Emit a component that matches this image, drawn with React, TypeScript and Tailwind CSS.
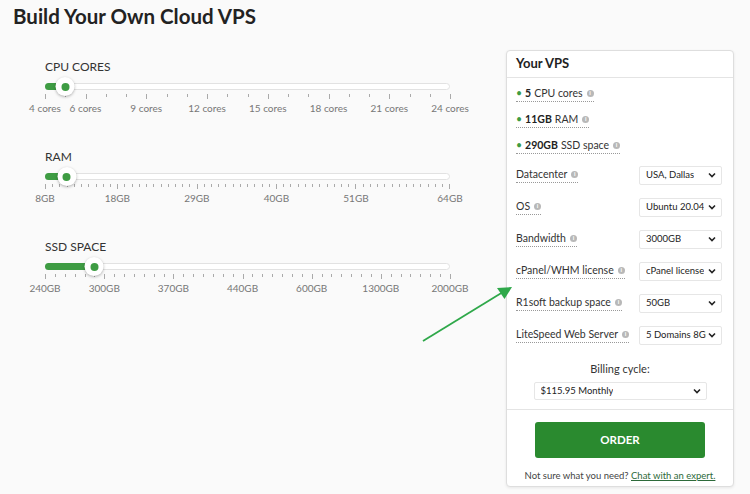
import React from "react";

const FONT = { fontFamily: '"Lato", "Noto Sans", sans-serif' };
const TRACK_W = 405;

type Major = { at: number; label: string };

function Slider({
  title,
  steps,
  value,
  majors,
}: {
  title: string;
  steps: number;
  value: number;
  majors: Major[];
}) {
  const pos = (i: number) => (i / steps) * TRACK_W;
  const majorSet = new Set(majors.map((m) => m.at));

  return (
    <div className="h-[90px]">
      <div className="text-[12px] leading-[16px] text-[#333]">{title}</div>
      <div className="relative mt-[8px] w-[405px]">
        <div className="h-[7px] rounded-full border border-[#e2e2e2] bg-white" />
        <div
          className="absolute left-0 top-0 h-[7px] rounded-full bg-[#3e9c43]"
          style={{ width: pos(value) }}
        />
        <div
          className="absolute top-[-6px] flex h-[19px] w-[19px] -translate-x-1/2 items-center justify-center rounded-full bg-white shadow-[0_1px_3px_rgba(0,0,0,0.3)]"
          style={{ left: pos(value) }}
        >
          <div className="h-[8px] w-[8px] rounded-full bg-[#3e9c43]" />
        </div>
      </div>
      <div className="mt-[4px] flex h-[5px] w-[406px] items-start justify-between">
        {Array.from({ length: steps + 1 }).map((_, i) => (
          <div
            key={i}
            className={`w-px bg-[#aaa] ${majorSet.has(i) ? "h-[5px]" : "h-[3px]"}`}
          />
        ))}
      </div>
      <div className="relative mt-[2px] h-[14px] w-[405px]">
        {majors.map((m) => (
          <span
            key={m.label}
            className="absolute top-0 -translate-x-1/2 whitespace-nowrap text-[10px] leading-[14px] text-[#777]"
            style={{ left: pos(m.at) }}
          >
            {m.label}
          </span>
        ))}
      </div>
    </div>
  );
}

function Info() {
  return (
    <span className="ml-[4px] inline-flex h-[7px] w-[7px] items-center justify-center rounded-full bg-[#b8b8b8] text-[6px] font-bold leading-none text-white">
      i
    </span>
  );
}

function Chevron() {
  return (
    <svg width="8" height="6" viewBox="0 0 8 6" className="shrink-0">
      <path d="M1 1.5 L4 4.5 L7 1.5" fill="none" stroke="#222" strokeWidth="1.6" />
    </svg>
  );
}

function Select({ value, className }: { value: string; className: string }) {
  return (
    <div
      className={`flex items-center justify-between overflow-hidden rounded-[2px] border border-[#e6e6e6] bg-white pl-[6px] pr-[5px] text-[9.5px] text-[#222] ${className}`}
    >
      <span className="mr-[2px] overflow-hidden whitespace-nowrap">{value}</span>
      <Chevron />
    </div>
  );
}

const specs = [
  { bold: "5", rest: "CPU cores" },
  { bold: "11GB", rest: "RAM" },
  { bold: "290GB", rest: "SSD space" },
];

const options = [
  { label: "Datacenter", value: "USA, Dallas" },
  { label: "OS", value: "Ubuntu 20.04" },
  { label: "Bandwidth", value: "3000GB" },
  { label: "cPanel/WHM license", value: "cPanel license" },
  { label: "R1soft backup space", value: "50GB" },
  { label: "LiteSpeed Web Server", value: "5 Domains 8GB" },
];

export default function App() {
  return (
    <div className="relative h-[494px] w-[750px] overflow-hidden bg-[#fafafa]" style={FONT}>
      <h1 className="px-[13px] pt-[2px] text-[20.5px] font-bold leading-[28px] text-[#222]">
        Build Your Own Cloud VPS
      </h1>

      <div className="flex items-start">
        <div className="mt-[29px] pl-[45px]">
          <Slider
            title="CPU CORES"
            steps={20}
            value={1}
            majors={[
              { at: 0, label: "4 cores" },
              { at: 2, label: "6 cores" },
              { at: 5, label: "9 cores" },
              { at: 8, label: "12 cores" },
              { at: 11, label: "15 cores" },
              { at: 14, label: "18 cores" },
              { at: 17, label: "21 cores" },
              { at: 20, label: "24 cores" },
            ]}
          />
          <Slider
            title="RAM"
            steps={56}
            value={3}
            majors={[
              { at: 0, label: "8GB" },
              { at: 10, label: "18GB" },
              { at: 21, label: "29GB" },
              { at: 32, label: "40GB" },
              { at: 43, label: "51GB" },
              { at: 56, label: "64GB" },
            ]}
          />
          <Slider
            title="SSD SPACE"
            steps={41}
            value={5}
            majors={[
              { at: 0, label: "240GB" },
              { at: 6, label: "300GB" },
              { at: 13, label: "370GB" },
              { at: 20, label: "440GB" },
              { at: 27, label: "600GB" },
              { at: 34, label: "1300GB" },
              { at: 41, label: "2000GB" },
            ]}
          />
        </div>

        <div className="ml-[55px] mt-[20px] w-[228px] rounded-[4px] border border-[#dedede] bg-white shadow-[0_1px_3px_rgba(0,0,0,0.08)]">
          <div className="flex h-[27px] items-center border-b border-[#e4e4e4] px-[9px] text-[13px] font-bold text-[#222]">
            Your VPS
          </div>
          <div className="pl-[9px] pr-[11px] pt-[3px]">
            {specs.map((s) => (
              <div key={s.rest} className="flex h-[26px] items-center">
                <span className="flex items-center border-b border-dotted border-[#999] pb-[1px] text-[10.5px] leading-[14px] text-[#333]">
                  <span className="mr-[3px] text-[#3e9c43]">•</span>
                  <b className="mr-[3px] text-[#222]">{s.bold}</b>
                  {s.rest}
                  <Info />
                </span>
              </div>
            ))}
            {options.map((o) => (
              <div key={o.label} className="flex h-[32px] items-center justify-between">
                <span className="flex items-center border-b border-dotted border-[#999] pb-[1px] text-[10.5px] leading-[14px] text-[#333]">
                  {o.label}
                  <Info />
                </span>
                <Select value={o.value} className="h-[19px] w-[83px]" />
              </div>
            ))}
          </div>
          <div className="mt-[10px] text-center text-[11px] leading-[16px] text-[#333]">
            Billing cycle:
          </div>
          <div className="mt-[5px] flex justify-center">
            <Select value="$115.95 Monthly" className="h-[18px] w-[173px]" />
          </div>
          <div className="mt-[9px] border-t border-[#e4e4e4] px-[28px] pt-[12px]">
            <div className="flex h-[36px] items-center justify-center rounded-[3px] bg-[#2a8a2f] text-[11.5px] font-bold text-white">
              ORDER
            </div>
          </div>
          <div className="mt-[12px] pb-[4px] text-center text-[9.5px] leading-[12px] text-[#444]">
            Not sure what you need?{" "}
            <span className="text-[#2d6a3a] underline">Chat with an expert.</span>
          </div>
        </div>
      </div>

      <svg
        className="pointer-events-none absolute left-0 top-0"
        width="750"
        height="494"
        viewBox="0 0 750 494"
      >
        <line x1="423" y1="341" x2="503" y2="292" stroke="#2fa84a" strokeWidth="1.8" />
        <polygon points="512,287 504.5,299 497,288" fill="#2fa84a" />
      </svg>
    </div>
  );
}
